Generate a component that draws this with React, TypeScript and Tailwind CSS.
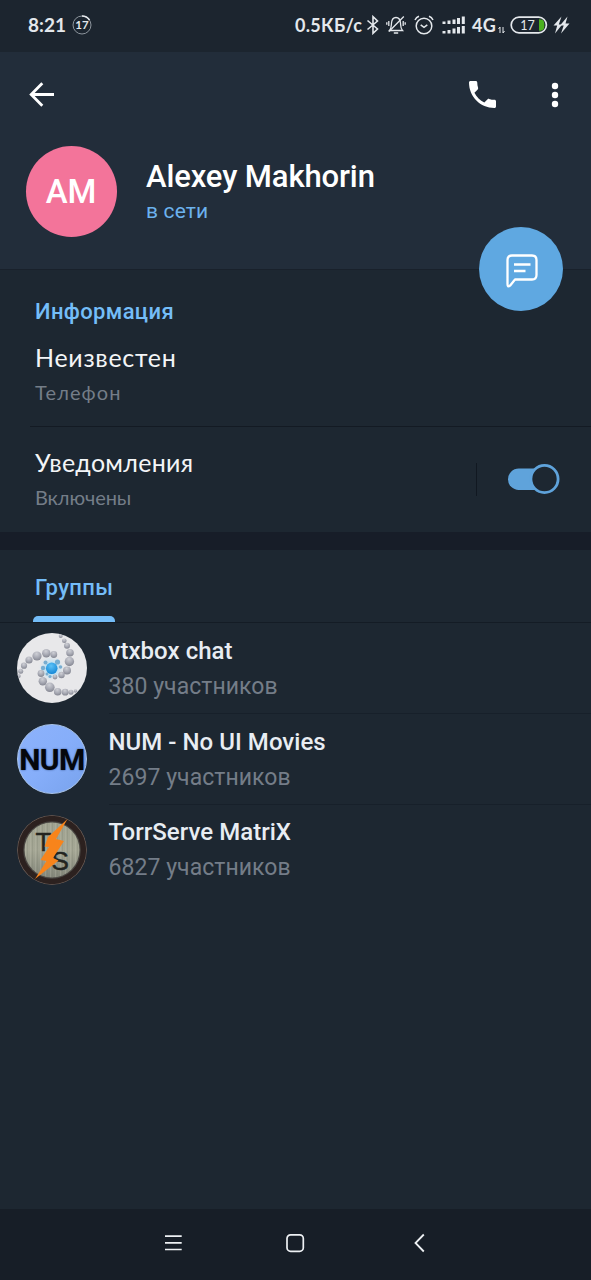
import React from "react";

interface IGroup {
  id: number;
  title: string;
  members: string;
  textClass: string;
  avatar: React.ReactNode;
}

interface IInfoText {
  title: string;
  subtitle: string;
  titleClass: string;
  subtitleClass: string;
}

// [x, y, radius] of every ball in the vtxbox spiral
const balls: number[][] = [
  [43.7, 3, 2],
  [47.3, 7.7, 2.3],
  [50, 12.7, 3],
  [53, 19.7, 3.8],
  [52.4, 28.5, 4.7],
  [50, 37.5, 4],
  [44.5, 42, 3.2],
  [38, 44, 2.4],
  [36.8, 21.5, 3.4],
  [29.3, 20.3, 4.2],
  [20, 23, 4.6],
  [12, 27, 3.6],
  [7, 32.7, 3.1],
  [3.7, 38.3, 2.5],
  [1.7, 43, 2],
  [24, 40.5, 3.4],
  [25.8, 48.3, 4.2],
  [32.8, 54.3, 4.8],
  [40.7, 58.7, 3.8],
  [48.2, 59.2, 3.4],
  [54, 59.2, 2.5],
  [58.5, 58, 1.8],
];

const blueBalls: number[][] = [
  [40.5, 29, 2.6],
  [43.5, 34, 1.8],
  [28.5, 29.5, 2],
  [26, 35, 2.2],
  [30, 41, 1.5],
  [33, 43.5, 1.6],
];

const VtxboxAvatar = () => (
  <svg viewBox="0 0 70 70" className="size-[70px] rounded-full">
    <defs>
      <radialGradient id="ball" cx="0.45" cy="0.25" r="0.75">
        <stop offset="0" stopColor="#cfd0d6" />
        <stop offset="0.55" stopColor="#a9abb5" />
        <stop offset="1" stopColor="#858792" />
      </radialGradient>
      <radialGradient id="core" cx="0.45" cy="0.3" r="0.75">
        <stop offset="0" stopColor="#5cc2f7" />
        <stop offset="1" stopColor="#0f83d4" />
      </radialGradient>
      <radialGradient id="halo">
        <stop offset="0.3" stopColor="#a9dcf5" />
        <stop offset="1" stopColor="#e7e7ea" stopOpacity="0" />
      </radialGradient>
    </defs>
    <rect width="70" height="70" fill="#e8e8ea" />
    <circle cx="34.5" cy="35.5" r="14" fill="url(#halo)" />
    {balls.map(([x, y, r]) => (
      <circle key={`${x}-${y}`} cx={x} cy={y} r={r} fill="url(#ball)" />
    ))}
    {blueBalls.map(([x, y, r]) => (
      <circle key={`${x}-${y}`} cx={x} cy={y} r={r} fill="#78add0" />
    ))}
    <circle cx="34.7" cy="35.3" r="5.8" fill="url(#core)" />
  </svg>
);

const NumAvatar = () => (
  <div className="flex size-[70px] items-center justify-center rounded-full border border-[#a9c4ea] bg-linear-to-br from-[#8db2fb] via-[#86aefa] to-[#78a2ec]">
    <span className="mt-[2px] font-['Roboto',sans-serif] text-[30px] leading-none font-bold tracking-[-0.5px] text-[#05070c] [text-shadow:0_0_2px_#2d4a80]">
      NUM
    </span>
  </div>
);

const TorrAvatar = () => (
  <svg viewBox="0 0 70 70" className="size-[70px] rounded-full">
    <defs>
      <linearGradient id="plate" x1="0" y1="0" x2="0" y2="1">
        <stop offset="0" stopColor="#9fa290" />
        <stop offset="0.5" stopColor="#a5a795" />
        <stop offset="1" stopColor="#83867a" />
      </linearGradient>
      <pattern id="grain" width="5" height="70" patternUnits="userSpaceOnUse">
        <rect x="0" width="1" height="70" fill="#767a6d" opacity="0.25" />
        <rect x="3" width="1" height="70" fill="#c3c5b5" opacity="0.25" />
      </pattern>
    </defs>
    <circle cx="35" cy="35" r="35" fill="#6e5f58" />
    <circle cx="35" cy="35" r="34.2" fill="#2c211f" />
    <circle cx="35" cy="35" r="28.8" fill="#494642" />
    <circle cx="35" cy="35" r="27.5" fill="url(#plate)" />
    <circle cx="35" cy="35" r="27.5" fill="url(#grain)" />
    <g fontFamily="Liberation Sans, sans-serif" fontSize="26" fill="#23241f" stroke="#23241f" strokeWidth="0.5">
      <text x="18.5" y="36">
        T
      </text>
      <text x="34.5" y="55">
        S
      </text>
    </g>
    <path d="M50.5 4 L31 22 L27.5 31.5 L32 32 L23.5 45 L29.5 46 L18 64 L41.5 45.5 L36 43 L47 26 L39 24 Z" fill="#f8841b" />
  </svg>
);

const groups: IGroup[] = [
  {
    id: 1,
    title: "vtxbox chat",
    members: "380 участников",
    textClass: "pt-[10px]",
    avatar: <VtxboxAvatar />,
  },
  {
    id: 2,
    title: "NUM - No UI Movies",
    members: "2697 участников",
    textClass: "pt-[10px]",
    avatar: <NumAvatar />,
  },
  {
    id: 3,
    title: "TorrServe MatriX",
    members: "6827 участников",
    textClass: "pt-[9px]",
    avatar: <TorrAvatar />,
  },
];

const StatusBar = () => (
  <div className="flex h-[52px] items-center bg-[#1c252f] pb-[2px] pl-[28px] font-['Lato','Open_Sans',sans-serif] text-[#e4e8ec]">
    <span className="w-[38px] text-[19px] font-bold whitespace-nowrap">8:21</span>
    <svg viewBox="0 0 20 20" className="ml-[6px] size-5" fill="none">
      <circle cx="10" cy="10" r="9" stroke="#8d959d" strokeWidth="1" />
      <path d="M10 1 A9 9 0 0 1 17.5 5" stroke="#e4e8ec" strokeWidth="1.6" />
      <text x="10" y="14" textAnchor="middle" fontSize="11.5" fontWeight="700" fill="#e4e8ec">
        17
      </text>
    </svg>
    <span className="ml-[203px] w-[69px] text-[18px] font-bold tracking-[0.3px] whitespace-nowrap">0.5КБ/с</span>
    <svg viewBox="0 0 14 20" className="ml-[2px] h-5 w-[14px]" fill="none" stroke="currentColor" strokeWidth="1.6">
      <path d="M1.5 5.5 L11.5 14 L7 18.3 V1.7 L11.5 6 L1.5 14.5" />
    </svg>
    <svg viewBox="0 0 20 20" className="ml-[6px] size-5" fill="none" stroke="currentColor" strokeWidth="1.3">
      <path d="M3.5 15.5 C5.5 13.5 5.3 11 5.5 8 C5.8 4.5 7.5 2.5 10 2.5 C12.5 2.5 14.2 4.5 14.5 8 C14.7 11 14.5 13.5 16.5 15.5 Z" />
      <path d="M7.8 18 H12.2 M17.8 1.5 L3 16.5 M2.8 6 V11 M0.8 7.3 V9.7 M17.2 6 V11 M19.2 7.3 V9.7" />
    </svg>
    <svg viewBox="0 0 20 20" className="ml-[8px] size-5" fill="none" stroke="currentColor" strokeWidth="1.5">
      <circle cx="10" cy="11" r="7.8" />
      <path d="M6.7 9.8 L10 12.4 L13.3 9.8 M1 5 C1.8 3.2 3 2 5 1.3 M19 5 C18.2 3.2 17 2 15 1.3" />
    </svg>
    <svg viewBox="0 0 24 18" className="ml-[8px] h-[18px] w-6" fill="currentColor">
      <path d="M0.5 5.5h3v2.5h-3z M5.5 4.5h3v3.5h-3z M10.5 3.5h3v4.5h-3z M15 2h3v6h-3z M19.8 0.5h3v7.5h-3z" />
      <path d="M0.5 15h3v2.5h-3z M5.5 14h3v3.5h-3z M10.5 12.5h3v5h-3z M15 11h3v6.5h-3z M19.8 10h3v7.5h-3z" />
    </svg>
    <span className="ml-[6px] w-[26px] text-[18px] font-bold tracking-[0.4px]">4G</span>
    <svg viewBox="0 0 7 8" className="mt-[9px] h-2 w-[7px]" fill="none" stroke="currentColor" strokeWidth="1">
      <path d="M2 7 V1 L0.5 3 M5 1 V7 L6.5 5" />
    </svg>
    <svg viewBox="0 0 38 18" className="ml-[5px] h-[18px] w-[38px]" fill="none">
      <path d="M29 3.2 C34.3 3.2 34.3 6 34.3 9 C34.3 12 34.3 14.8 29 14.8 Z" fill="#4bb01f" />
      <rect x="1.2" y="1.2" width="35.2" height="15.6" rx="7.8" stroke="#e4e8ec" strokeWidth="1.7" />
      <text x="17.5" y="13.5" textAnchor="middle" fontSize="12.5" fill="#e4e8ec">
        17
      </text>
    </svg>
    <svg viewBox="0 0 17 18" className="ml-[5px] h-[18px] w-[17px]" fill="currentColor">
      <path d="M8.5 0.5 L0.5 9.5 H4.2 L2 17.5 L9.2 8.5 H5.8 Z" />
      <path d="M14.5 0.5 L7 9.5 H10.7 L8 17.5 L16.5 7.5 H12.5 Z" />
    </svg>
  </div>
);

const Header = () => (
  <header className="relative h-[218px] border-b border-[#19212b] bg-[#222d3a]">
    <div className="flex h-[84px] items-center pl-[28px] text-white">
      <svg viewBox="0 0 28 28" className="size-7" fill="none" stroke="currentColor" strokeWidth="2.8">
        <path d="M26 14.5 H3.5 M14.3 3.3 L3.2 14.5 L14.3 25.7" />
      </svg>
      <svg viewBox="3 3 18 18" className="ml-[413px] size-[27px]" fill="currentColor">
        <path d="M6.62 10.79c1.44 2.83 3.76 5.14 6.59 6.59l2.2-2.2c.27-.27.67-.36 1.02-.24 1.12.37 2.33.57 3.57.57.55 0 1 .45 1 1V20c0 .55-.45 1-1 1-9.39 0-17-7.61-17-17 0-.55.45-1 1-1h3.5c.55 0 1 .45 1 1 0 1.25.2 2.45.57 3.57.11.35.03.74-.25 1.02l-2.2 2.2z" />
      </svg>
      <svg viewBox="0 0 8 26" className="mt-[2px] ml-[55px] h-[26px] w-2" fill="currentColor">
        <circle cx="4" cy="4" r="3.2" />
        <circle cx="4" cy="13" r="3.2" />
        <circle cx="4" cy="22" r="3.2" />
      </svg>
    </div>
    <div className="flex items-center pt-[10px] pl-[25.5px]">
      <div className="flex size-[91px] items-center justify-center rounded-full bg-[#f3749a] text-[33px] font-medium text-white">
        AM
      </div>
      <div className="mt-[3px] ml-[29.5px] flex flex-col">
        <h1 className="text-[31px] leading-[36px] font-medium tracking-[-0.12px] whitespace-nowrap text-white">
          Alexey Makhorin
        </h1>
        <p className="text-[21px] leading-[33px] tracking-[0.15px] text-[#6cb2ee]">в сети</p>
      </div>
    </div>
    <button className="absolute top-[175px] left-[479px] flex size-[84px] items-center justify-center rounded-full bg-[#5fa8e1] text-white">
      <svg viewBox="0 0 34 34" className="mt-[3px] ml-px size-[34px]" fill="none" stroke="currentColor" strokeWidth="2.3" strokeLinejoin="round">
        <path d="M2.5 30 V6 Q2.5 1.5 7 1.5 H27 Q31.5 1.5 31.5 6 V21 Q31.5 25.5 27 25.5 H10 L5 31.7 Q2.5 33.8 2.5 30 Z" />
        <path d="M9 10.5 H25.5 M9 17 H20.5" />
      </svg>
    </button>
  </header>
);

const InfoText: React.FC<IInfoText> = ({ title, subtitle, titleClass, subtitleClass }) => {
  return (
    <div className="font-['Lato','Open_Sans',sans-serif] whitespace-nowrap">
      <p className={`text-[25px] leading-[36px] text-[#f3f5f7] ${titleClass}`}>{title}</p>
      <p className={`text-[20px] leading-[34px] text-[#747d88] ${subtitleClass}`}>{subtitle}</p>
    </div>
  );
};

const Toggle = () => (
  <svg viewBox="0 0 52 32" className="h-8 w-[52px]">
    <rect x="0" y="5.5" width="44" height="21.5" rx="10.7" fill="#5fa3db" />
    <circle cx="36.5" cy="16" r="13.6" fill="#1d2731" stroke="#5fa3db" strokeWidth="2.8" />
  </svg>
);

const Info = () => (
  <section className="h-[262px]">
    <h2 className="pt-[26px] pl-[35px] text-[22px] leading-[32px] font-medium tracking-[0.36px] text-[#74bdf8]">
      Информация
    </h2>
    <div className="h-[98px] pt-[11px] pl-[35px]">
      <InfoText
        title="Неизвестен"
        subtitle="Телефон"
        titleClass="tracking-[0.7px]"
        subtitleClass="tracking-[1.1px]"
      />
    </div>
    <div className="ml-[30px] flex h-[106px] border-t border-[#131a23] pl-[5px]">
      <div className="w-[441px] pt-[17px]">
        <InfoText
          title="Уведомления"
          subtitle="Включены"
          titleClass="tracking-[0.3px]"
          subtitleClass="tracking-[-0.1px]"
        />
      </div>
      <div className="mt-[36px] mr-[31px] h-[33px] w-px bg-[#111821]" />
      <div className="pt-[36px]">
        <Toggle />
      </div>
    </div>
  </section>
);

const GroupRow: React.FC<{ group: IGroup; last: boolean }> = ({ group, last }) => {
  return (
    <li className="flex h-[91px] pl-[17px]">
      <div className="pt-[10px]">{group.avatar}</div>
      <div className={`ml-[21.5px] flex-1 ${group.textClass} ${last ? "" : "border-b border-[#17202a]"}`}>
        <p className="text-[24px] leading-[36px] font-medium tracking-[0.04px] text-[#e8edf3]">{group.title}</p>
        <p className="text-[23px] leading-[36px] tracking-[0.05px] text-[#747d88]">{group.members}</p>
      </div>
    </li>
  );
};

const NavBar = () => (
  <nav className="flex h-[71px] items-center bg-[#171e27] pb-[4px] pl-[164px] text-[#eef1f4]">
    <svg viewBox="0 0 20 20" className="size-5" fill="none" stroke="currentColor" strokeWidth="1.7">
      <path d="M1 3.2 H17.7 M1 9.8 H17.7 M1 16.5 H17.7" />
    </svg>
    <svg viewBox="0 0 20 20" className="ml-[101px] size-5" fill="none" stroke="currentColor" strokeWidth="1.7">
      <rect x="2" y="1.8" width="16.3" height="16.5" rx="3.6" />
    </svg>
    <svg viewBox="0 0 20 20" className="ml-[104px] size-5" fill="none" stroke="currentColor" strokeWidth="1.8">
      <path d="M14.8 1.5 L6.5 10 L14.8 18.5" />
    </svg>
  </nav>
);

const App = () => {
  return (
    <div className="flex h-[1280px] w-[591px] flex-col overflow-hidden bg-[#1d2731] font-['Roboto',sans-serif]">
      <StatusBar />
      <Header />
      <Info />
      <div className="h-[18px] shrink-0 bg-[#171d28]" />
      <div className="flex h-[73px] flex-col justify-between border-b border-[#141c25] pl-[33px]">
        <span className="mt-[21px] ml-[2px] text-[22px] leading-[34px] font-medium tracking-[0.36px] text-[#74bdf8]">
          Группы
        </span>
        <span className="h-[6px] w-[82px] rounded-t-[5px] bg-[#74bdf8]" />
      </div>
      <ul className="flex-1">
        {groups.map((item, index) => {
          return <GroupRow key={item.id} group={item} last={index === groups.length - 1} />;
        })}
      </ul>
      <NavBar />
    </div>
  );
};

export default App;
